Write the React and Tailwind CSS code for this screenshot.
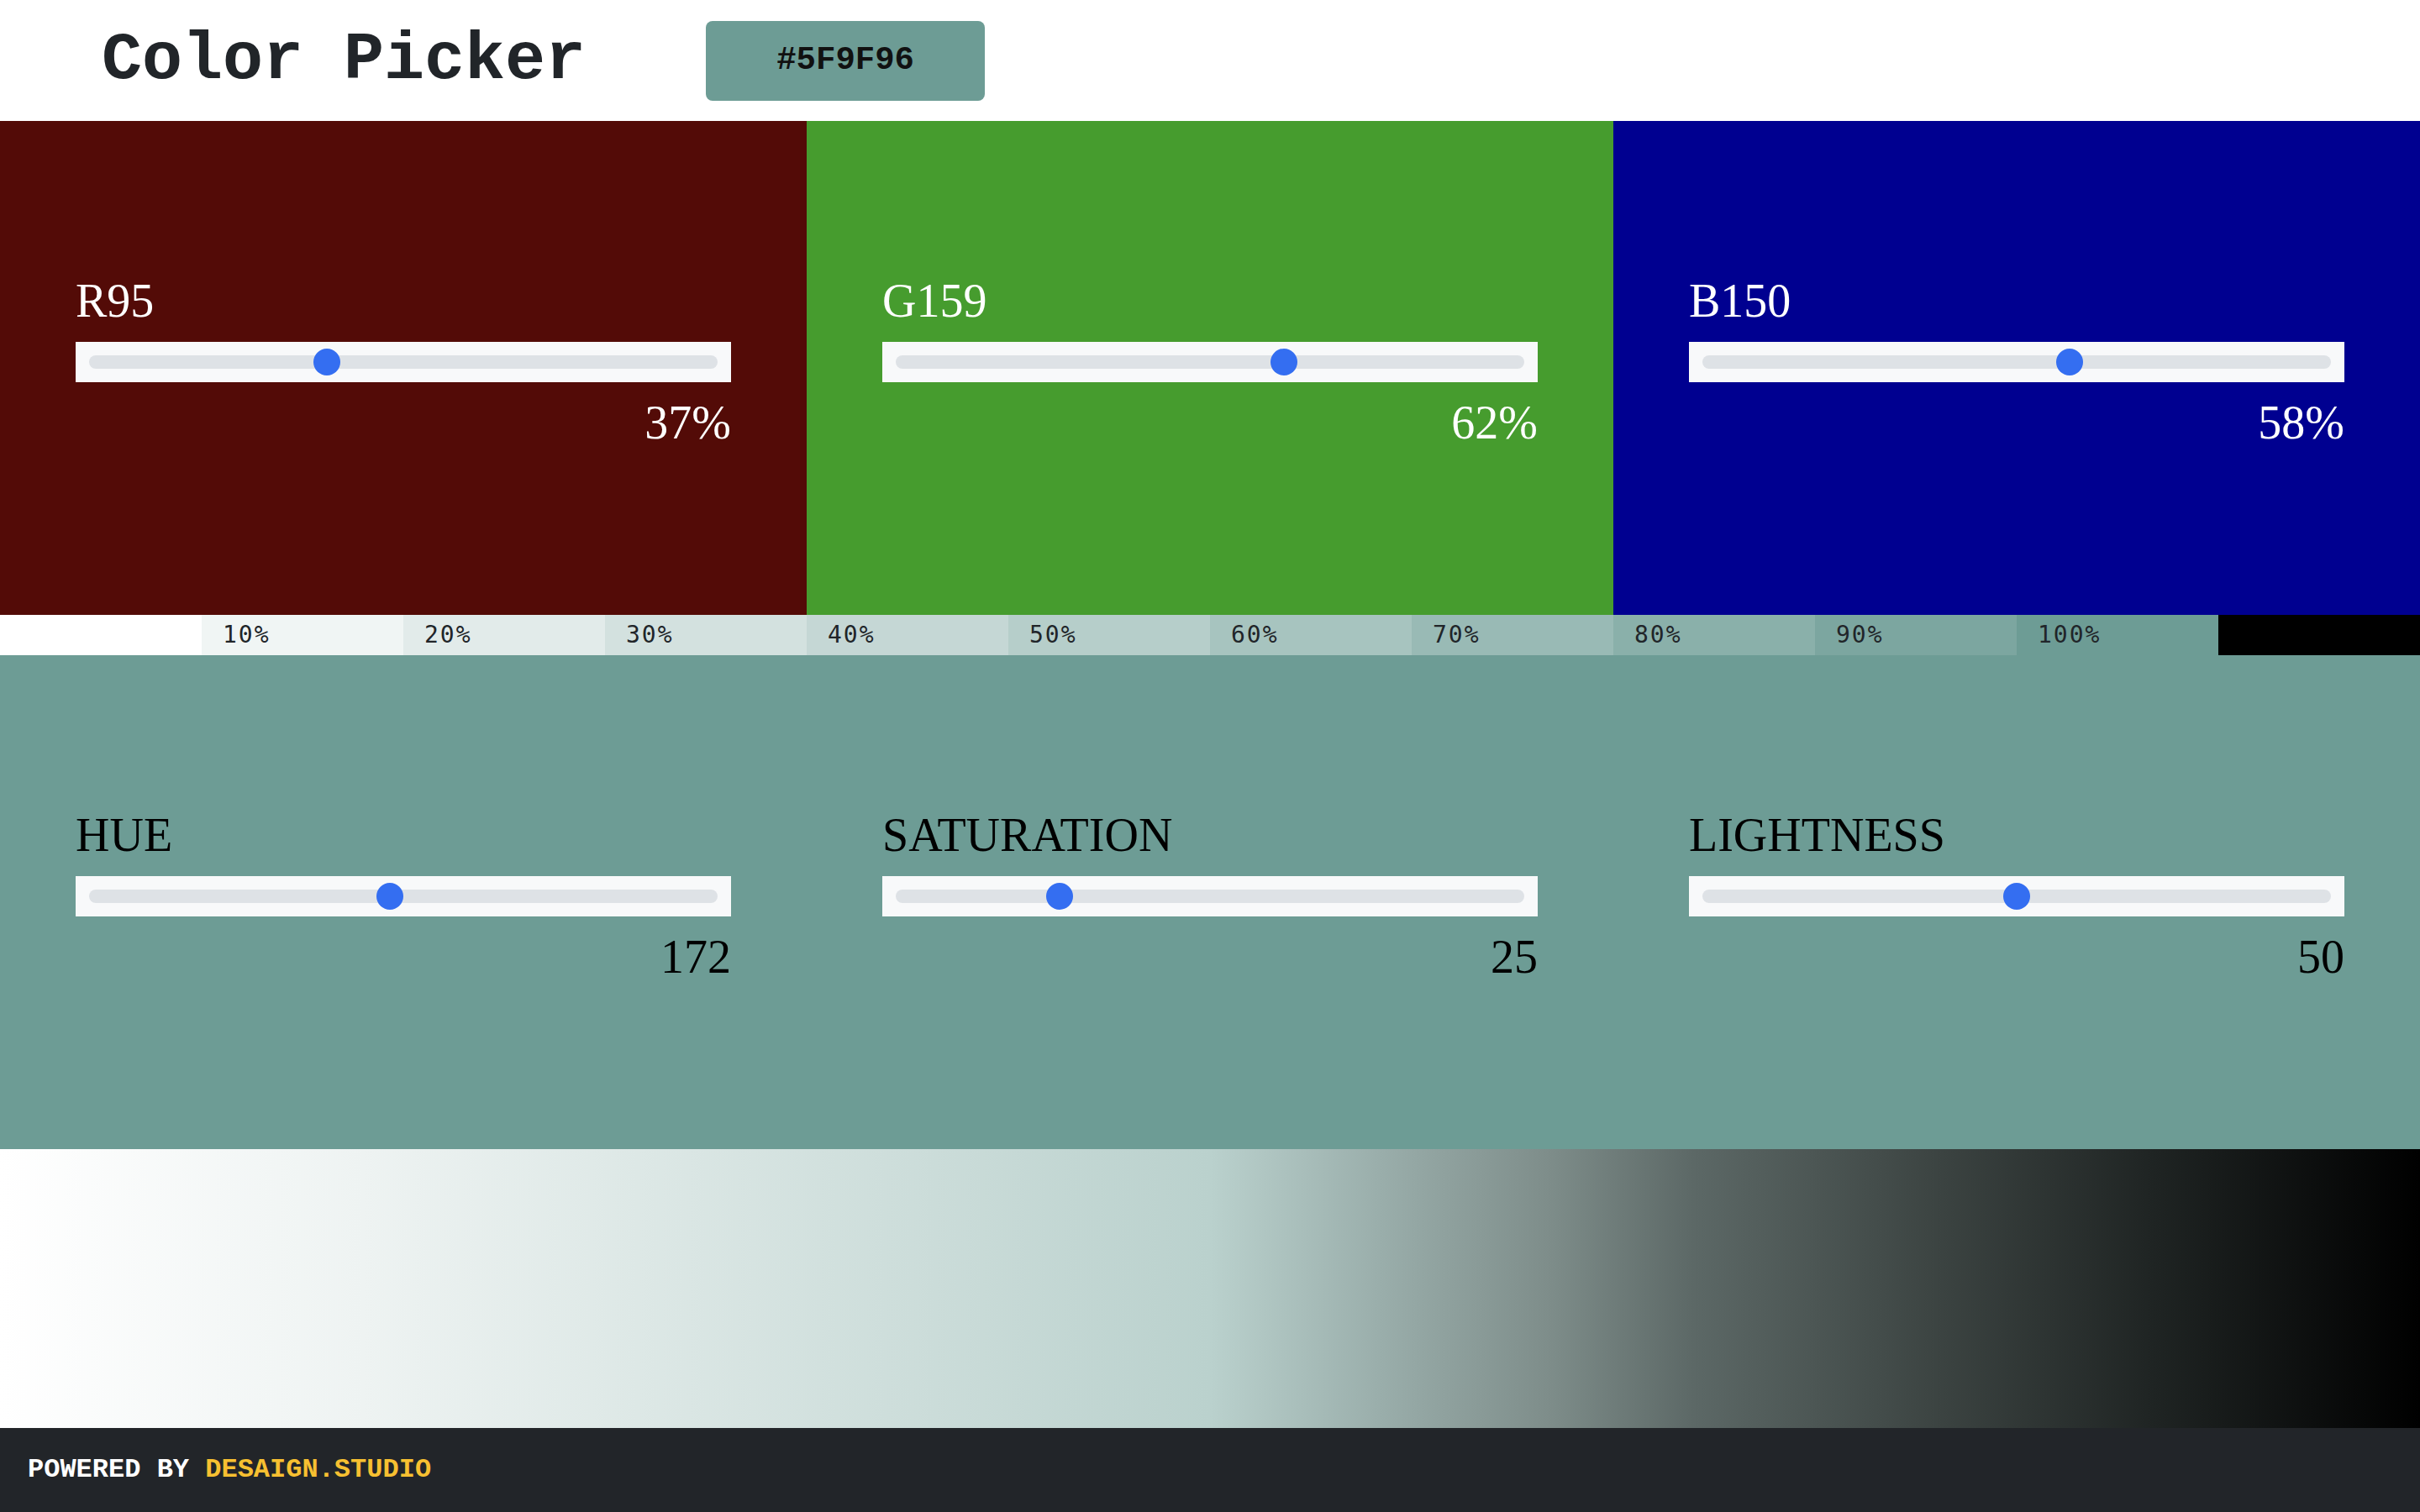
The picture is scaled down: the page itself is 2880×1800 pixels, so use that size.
import React from "react";

const rgbPanels = [
  { label: "R95", value: 95, max: 255, pct: "37%", bg: "bg-[#530b07]" },
  { label: "G159", value: 159, max: 255, pct: "62%", bg: "bg-[#469c2e]" },
  { label: "B150", value: 150, max: 255, pct: "58%", bg: "bg-[#000090]" },
];

const hslPanels = [
  { label: "HUE", value: 172, max: 360 },
  { label: "SATURATION", value: 25, max: 100 },
  { label: "LIGHTNESS", value: 50, max: 100 },
];

const tints = [
  { label: "", bg: "bg-white" },
  { label: "10%", bg: "bg-[#f0f5f4]" },
  { label: "20%", bg: "bg-[#e2ebea]" },
  { label: "30%", bg: "bg-[#d3e1df]" },
  { label: "40%", bg: "bg-[#c5d7d5]" },
  { label: "50%", bg: "bg-[#b6ceca]" },
  { label: "60%", bg: "bg-[#a7c4bf]" },
  { label: "70%", bg: "bg-[#99bab5]" },
  { label: "80%", bg: "bg-[#8ab0aa]" },
  { label: "90%", bg: "bg-[#7ca6a0]" },
  { label: "100%", bg: "bg-[#6d9c95]" },
  { label: "", bg: "bg-black" },
];

const serif = "font-['Liberation_Serif','Times_New_Roman',serif]";
const mono = "font-['Liberation_Mono','Courier_New',monospace]";

const Slider = ({ value, max }) => {
  const frac = value / max;
  return (
    <div className="h-12 bg-[#f8f9fa] px-4 flex items-center">
      <div className="relative w-full h-4 rounded-full bg-[#dee2e6]">
        <div
          className="absolute top-1/2 -translate-y-1/2 w-8 h-8 rounded-full bg-[#346ef1]"
          style={{ left: `calc((100% - 32px) * ${frac})` }}
        />
      </div>
    </div>
  );
};

const Panel = ({ label, value, max, display, textColor }) => (
  <div className={`flex-1 flex flex-col px-[90px] pt-[186px] ${serif} ${textColor}`}>
    <div className="text-[56px] leading-[56px]">{label}</div>
    <div className="mt-[21px]">
      <Slider value={value} max={max} />
    </div>
    <div className="mt-[20px] text-[56px] leading-[56px] text-right">{display}</div>
  </div>
);

export default function App() {
  return (
    <div className="w-[2880px] h-[1800px] flex flex-col bg-white overflow-hidden">
      {/* Header */}
      <header className="h-[144px] flex items-center pl-[121px] shrink-0">
        <h1 className={`${mono} font-bold text-[80px] leading-[80px] text-[#212529]`}>Color Picker</h1>
        <div
          className={`ml-[143px] w-[332px] h-[95px] rounded-lg bg-[#6d9c95] flex items-center justify-center ${mono} font-bold text-[39px] text-[#111]`}
        >
          #5F9F96
        </div>
      </header>

      {/* RGB */}
      <div className="h-[588px] flex shrink-0">
        {rgbPanels.map((p) => (
          <div key={p.label} className={`flex-1 flex ${p.bg}`}>
            <Panel label={p.label} value={p.value} max={p.max} display={p.pct} textColor="text-white" />
          </div>
        ))}
      </div>

      {/* Tints */}
      <div className="h-12 flex shrink-0">
        {tints.map((t, i) => (
          <div
            key={i}
            className={`flex-1 flex items-center pl-[25px] ${t.bg} font-['DejaVu_Sans_Mono',monospace] text-[28px] tracking-[2px] text-[#212529]`}
          >
            {t.label}
          </div>
        ))}
      </div>

      {/* HSL */}
      <div className="h-[588px] flex bg-[#6d9c95] shrink-0">
        {hslPanels.map((p) => (
          <Panel key={p.label} label={p.label} value={p.value} max={p.max} display={p.value} textColor="text-black" />
        ))}
      </div>

      {/* Gradient */}
      <div className="h-[332px] shrink-0 bg-[linear-gradient(to_right,#ffffff_0%,#eef3f2_15%,#bad1cd_50%,#9aaeab_57%,#7e8d8a_64%,#5c6866_70%,#3c4442_80%,#1f2423_89%,#000000_100%)]" />

      {/* Footer */}
      <footer className={`h-[100px] shrink-0 bg-[#222529] flex items-center pl-[33px] ${mono} font-bold text-[32px]`}>
        <span className="text-white whitespace-pre">POWERED BY </span>
        <span className="text-[#f7c031]">DESAIGN.STUDIO</span>
      </footer>
    </div>
  );
}
